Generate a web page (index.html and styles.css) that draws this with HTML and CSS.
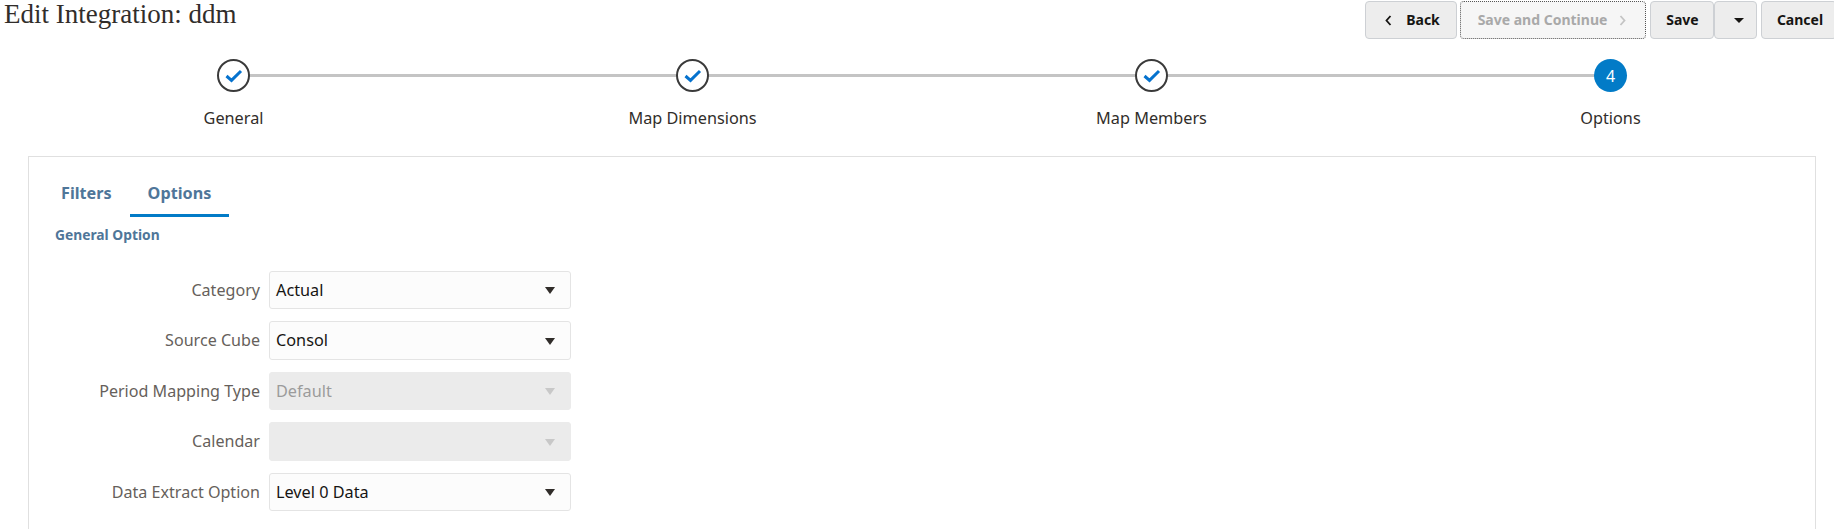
FILE: index.html
```html
<!DOCTYPE html>
<html lang="en">
<head>
<meta charset="utf-8">
<title>Edit Integration: ddm</title>
<link rel="stylesheet" href="styles.css">
</head>
<body>
<header class="top">
  <h1 class="title">Edit Integration: ddm</h1>
  <div class="actions">
    <button class="btn btn-back" type="button"><svg class="chev" width="7" height="11" viewBox="0 0 7 11"><path d="M5.5 1 1.5 5.5 5.5 10" fill="none" stroke="#161513" stroke-width="1.8"/></svg>Back</button>
    <button class="btn btn-next" type="button" disabled>Save and Continue<svg class="chev-r" width="7" height="11" viewBox="0 0 7 11"><path d="M1.5 1 5.5 5.5 1.5 10" fill="none" stroke="#c4c4c4" stroke-width="1.8"/></svg></button>
    <button class="btn btn-save" type="button">Save</button>
    <button class="btn btn-menu" type="button" aria-label="More"><span class="caret-small"></span></button>
    <button class="btn btn-cancel" type="button">Cancel</button>
  </div>
</header>

<ol class="steps">
  <li class="step step-line"><span class="dot"><svg width="18" height="15" viewBox="0 0 18 15"><path d="M1.5 8 6.5 12.4 16 3" fill="none" stroke="#0572ce" stroke-width="3"/></svg></span><span class="step-label">General</span></li>
  <li class="step step-line"><span class="dot"><svg width="18" height="15" viewBox="0 0 18 15"><path d="M1.5 8 6.5 12.4 16 3" fill="none" stroke="#0572ce" stroke-width="3"/></svg></span><span class="step-label">Map Dimensions</span></li>
  <li class="step step-line"><span class="dot"><svg width="18" height="15" viewBox="0 0 18 15"><path d="M1.5 8 6.5 12.4 16 3" fill="none" stroke="#0572ce" stroke-width="3"/></svg></span><span class="step-label">Map Members</span></li>
  <li class="step"><span class="dot dot-current">4</span><span class="step-label">Options</span></li>
</ol>

<main class="panel">
  <nav class="tabs">
    <a class="tab">Filters</a>
    <a class="tab tab-active">Options</a>
  </nav>
  <h2 class="section">General Option</h2>
  <div class="form">
    <div class="row"><label class="lbl">Category</label><div class="field"><span class="val">Actual</span><span class="caret"></span></div></div>
    <div class="row"><label class="lbl">Source Cube</label><div class="field"><span class="val">Consol</span><span class="caret"></span></div></div>
    <div class="row"><label class="lbl">Period Mapping Type</label><div class="field field-off"><span class="val">Default</span><span class="caret"></span></div></div>
    <div class="row"><label class="lbl">Calendar</label><div class="field field-off"><span class="val"></span><span class="caret"></span></div></div>
    <div class="row"><label class="lbl">Data Extract Option</label><div class="field"><span class="val">Level 0 Data</span><span class="caret"></span></div></div>
  </div>
</main>
</body>
</html>
```
FILE: styles.css
```css
* { box-sizing: border-box; }
html, body { margin: 0; height: 529px; overflow: hidden; background: #fff; }
body { font-family: "Noto Sans", "Open Sans", sans-serif; color: #312d2a; }

.top { display: flex; justify-content: space-between; align-items: flex-start; height: 39px; }
.title { margin: 0 0 0 4px; font: 400 27px/28px "Liberation Serif", serif; color: #312d2a; }
.actions { display: flex; padding-top: 1px; flex: none; width: 469px; }
.btn { height: 38px; border: 1px solid #cdd0d4; border-radius: 4px; background: #ededed; color: #161513; font: 700 14px/1 "Noto Sans", sans-serif; padding: 0; display: flex; align-items: center; justify-content: center; flex: none; }
.chev { margin-right: 14px; margin-left: 3px; }
.chev-r { margin-left: 12px; margin-right: 2px; }
.btn-back { width: 92px; margin-right: 3px; }
.btn-next { width: 186px; margin-right: 4px; background: #f6f6f6; color: #a9a9a9; border: 1px dotted #555; }
.btn-save { width: 64px; margin-right: 0; padding-left: 1px; }
.btn-menu { width: 43px; margin-right: 4px; padding-left: 6px; }
.btn-cancel { width: 76px; padding-left: 2px; }
.caret-small { width: 0; height: 0; border-left: 5px solid transparent; border-right: 5px solid transparent; border-top: 5px solid #161513; }

.steps { list-style: none; margin: 0 0 0 4px; padding: 20px 0 0; display: grid; grid-template-columns: repeat(4, 459px); height: 117px; }
.step { position: relative; display: flex; flex-direction: column; align-items: center; }
.step-line::after { content: ""; position: absolute; left: 229px; width: 459px; top: 15px; height: 3px; background: #c4c4c4; }
.dot { position: relative; z-index: 1; width: 33px; height: 33px; border-radius: 50%; border: 2px solid #3a3a3a; background: #fff; display: flex; align-items: center; justify-content: center; }
.dot-current { border: 0; background: #027bc7; color: #fff; font-size: 16px; }
.step-label { margin-top: 15px; font-size: 16.25px; line-height: 22px; color: #312d2a; }

.panel { margin: 0 18px 0 28px; height: 373px; border: 1px solid #e0e0e0; border-bottom: 0; padding: 16px 0 0 14px; }
.tabs { display: flex; height: 44px; }
.tab { height: 44px; padding: 9px 18px 0; font-size: 16.2px; line-height: 22px; font-weight: 700; color: #4f7699; }
.tab-active { border-bottom: 3px solid #027bc7; }
.section { margin: 9px 0 0 12px; font-size: 13.8px; line-height: 18px; font-weight: 700; color: #4f7699; }
.form { margin-top: 26.5px; margin-left: -43px; display: flex; flex-direction: column; gap: 12px; }
.row { display: flex; height: 38.5px; align-items: center; }
.lbl { width: 260px; text-align: right; font-size: 16.1px; line-height: 22px; color: #665f5b; margin-right: 9px; flex: none; }
.field { width: 302px; height: 100%; flex: none; display: flex; align-items: center; justify-content: space-between; padding: 0 15px 0 6px; border: 1px solid #e4e4e4; border-radius: 3px; background: #fcfcfc; color: #161513; font-size: 16.25px; line-height: 22px; }
.caret { width: 0; height: 0; margin-top: 2px; border-left: 5px solid transparent; border-right: 5px solid transparent; border-top: 7px solid #312d2a; }
.field-off { background: #ebebeb; border-color: #ebebeb; color: #9b9b9b; }
.field-off .caret { border-top-color: #c8c8c8; }
```
